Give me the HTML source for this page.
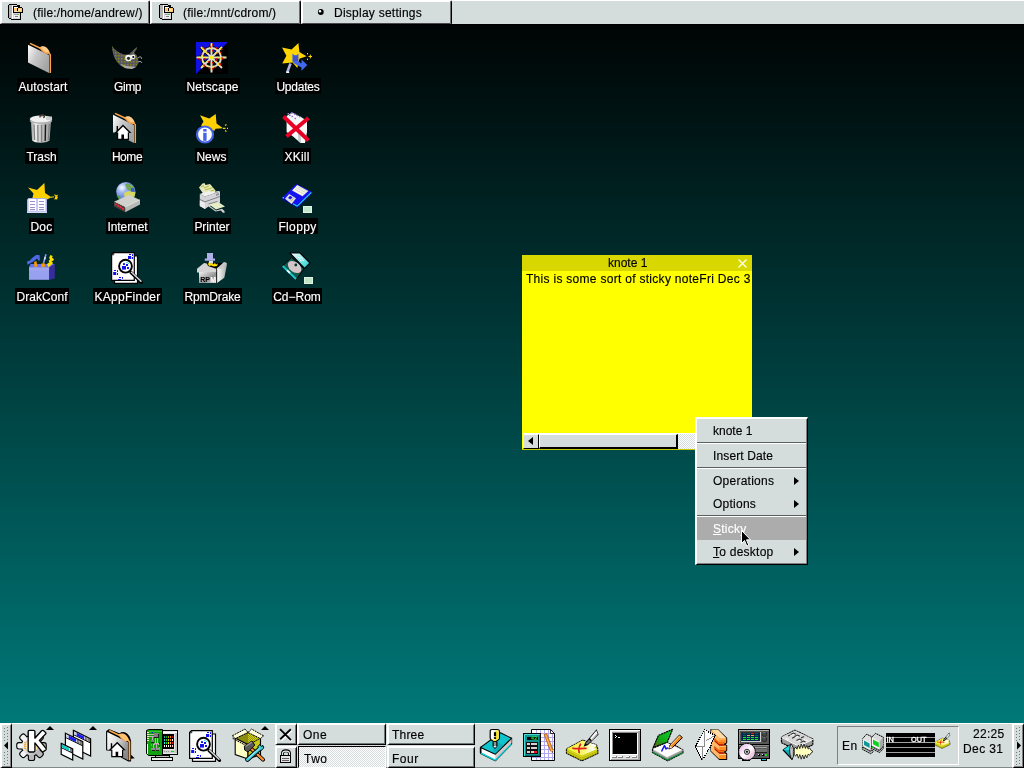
<!DOCTYPE html>
<html>
<head>
<meta charset="utf-8">
<title>KDE desktop</title>
<style>
html,body{margin:0;padding:0;}
body{width:1024px;height:768px;overflow:hidden;position:relative;font-family:"Liberation Sans",sans-serif;font-size:12px;color:#000;
 background:linear-gradient(to bottom,#000000 0px,#008080 768px);}
svg{position:absolute;display:block;overflow:visible;}
.px{shape-rendering:crispEdges;}
/* top taskbar */
#tbar{position:absolute;left:0;top:0;width:1024px;height:24px;background:#d4dcdc;border-top:1px solid #fff;border-bottom:1px solid #000;box-sizing:content-box;height:23px;}
.tbtn{position:absolute;top:-1px;height:24px;background:#d4dcdc;box-sizing:border-box;border-top:2px solid #fff;border-left:2px solid #fff;border-right:1px solid #000;border-bottom:1px solid #484848;}
.tbtn i{position:absolute;right:0;top:-1px;width:1px;height:23px;background:#707070;}
.tbtn span{position:absolute;top:4px;font-size:12px;white-space:nowrap;}
/* desktop icons */
.dl{position:absolute;height:16px;line-height:19px;overflow:hidden;background:#000;color:#fff;font-size:12px;text-align:center;white-space:nowrap;}
/* knote */
#knote{position:absolute;left:522px;top:255px;width:230px;height:195px;background:#ffff00;}
#ktitle{position:absolute;left:0;top:0;width:230px;height:16px;background:#d8d800;line-height:17px;font-size:12px;letter-spacing:0px;box-sizing:border-box;padding-left:86px;}
#ktext{position:absolute;left:4px;top:17px;font-size:12px;line-height:14px;white-space:nowrap;letter-spacing:0.29px;}
/* menu */
#menu{position:absolute;left:695px;top:417px;width:113px;height:148px;background:#d4dcdc;box-sizing:border-box;border-top:2px solid #fff;border-left:2px solid #fff;border-right:1px solid #000;border-bottom:1px solid #000;box-shadow:inset -1px -1px 0 #808080;}
.mi{position:absolute;left:16px;font-size:12px;line-height:14px;letter-spacing:0.25px;white-space:nowrap;}
.sep{position:absolute;left:0;width:109px;height:1px;background:#586060;border-bottom:1px solid #fff;}
.arr{position:absolute;left:97px;width:0;height:0;border-left:5px solid #000;border-top:4px solid transparent;border-bottom:4px solid transparent;}
/* panel */
#panel{position:absolute;left:0;top:723px;width:1024px;height:45px;background:#d4dcdc;border-top:1px solid #fff;border-bottom:1px solid #808888;box-sizing:border-box;}
.pb{position:absolute;box-sizing:border-box;background:#d4dcdc;border-top:2px solid #fff;border-left:2px solid #fff;border-right:1px solid #000;border-bottom:1px solid #000;box-shadow:inset -1px -1px 0 #707878;font-size:12px;}
.pb span{position:absolute;left:4px;top:2px;letter-spacing:0.5px;}
.pi{position:absolute;width:32px;height:32px;}
</style>
</head>
<body>
<div id="root" style="position:absolute;left:0;top:0;width:1024px;height:768px;will-change:transform;-webkit-text-stroke-width:0.15px;">
<!-- TOPBAR -->
<div id="tbar">
 <div class="tbtn" style="left:0;width:150px"><i></i><svg class="px" style="left:6px;top:2px" width="16" height="17" viewBox="0 0 16 17">
<rect x="1" y="0" width="8" height="1" fill="#000"/><rect x="0" y="1" width="1" height="13" fill="#000"/><rect x="1" y="14" width="2" height="1" fill="#000"/><rect x="3" y="15" width="10" height="1" fill="#000"/><rect x="12" y="9" width="1" height="6" fill="#000"/>
<rect x="1" y="1" width="3" height="13" fill="#b4b4b4"/><rect x="4" y="1" width="1" height="14" fill="#fff"/><rect x="3" y="14" width="1" height="1" fill="#b4b4b4"/>
<rect x="5" y="1" width="7" height="14" fill="#d8d8d8"/>
<rect x="5" y="2" width="10" height="7" fill="#000"/><rect x="9" y="1" width="3" height="1" fill="#000"/><rect x="12" y="2" width="2" height="1" fill="#d4dcdc"/><rect x="14" y="2" width="1" height="2" fill="#d4dcdc"/>
<rect x="6" y="4" width="8" height="4" fill="#ffc870"/><rect x="6" y="3" width="4" height="1" fill="#fff"/><rect x="9" y="4" width="1" height="3" fill="#000"/><rect x="6" y="7" width="3" height="1" fill="#e0e0e0"/><rect x="10" y="5" width="3" height="2" fill="#ffe0a0"/>
<rect x="6" y="10" width="5" height="1" fill="#a0a0a0"/><rect x="9" y="10" width="2" height="1" fill="#60c060"/><rect x="6" y="11" width="5" height="3" fill="#f0f0f0"/><rect x="7" y="12" width="3" height="1" fill="#808080"/>
</svg><span style="left:31px;letter-spacing:0.18px">(file:/home/andrew/)</span></div>
 <div class="tbtn" style="left:150px;width:151px"><i></i><svg class="px" style="left:7px;top:2px" width="16" height="17" viewBox="0 0 16 17">
<rect x="1" y="0" width="8" height="1" fill="#000"/><rect x="0" y="1" width="1" height="13" fill="#000"/><rect x="1" y="14" width="2" height="1" fill="#000"/><rect x="3" y="15" width="10" height="1" fill="#000"/><rect x="12" y="9" width="1" height="6" fill="#000"/>
<rect x="1" y="1" width="3" height="13" fill="#b4b4b4"/><rect x="4" y="1" width="1" height="14" fill="#fff"/><rect x="3" y="14" width="1" height="1" fill="#b4b4b4"/>
<rect x="5" y="1" width="7" height="14" fill="#d8d8d8"/>
<rect x="5" y="2" width="10" height="7" fill="#000"/><rect x="9" y="1" width="3" height="1" fill="#000"/><rect x="12" y="2" width="2" height="1" fill="#d4dcdc"/><rect x="14" y="2" width="1" height="2" fill="#d4dcdc"/>
<rect x="6" y="4" width="8" height="4" fill="#ffc870"/><rect x="6" y="3" width="4" height="1" fill="#fff"/><rect x="9" y="4" width="1" height="3" fill="#000"/><rect x="6" y="7" width="3" height="1" fill="#e0e0e0"/><rect x="10" y="5" width="3" height="2" fill="#ffe0a0"/>
<rect x="6" y="10" width="5" height="1" fill="#a0a0a0"/><rect x="9" y="10" width="2" height="1" fill="#60c060"/><rect x="6" y="11" width="5" height="3" fill="#f0f0f0"/><rect x="7" y="12" width="3" height="1" fill="#808080"/>
</svg><span style="left:31px;letter-spacing:0.18px">(file:/mnt/cdrom/)</span></div>
 <div class="tbtn" style="left:301px;width:151px"><i></i><svg style="left:14px;top:6px" width="8" height="8" viewBox="0 0 8 8"><circle cx="3.8" cy="4" r="2.9" fill="#000"/><circle cx="3" cy="3.2" r="1.2" fill="#fff"/></svg><span style="left:31px;letter-spacing:0.25px">Display settings</span></div>
</div>
<!-- DESKTOP ICONS -->
<svg class="px" style="left:26px;top:42px" width="32" height="32" viewBox="0 0 32 32"><g shape-rendering="auto"><defs><linearGradient id="gAS" x1="0" x2="1" y1="0" y2="0.6"><stop offset="0" stop-color="#fff"/><stop offset="0.45" stop-color="#c8c8c8"/><stop offset="1" stop-color="#a4a4a4"/></linearGradient></defs>
<path d="M2 2.8L23 13V31L2 20.5Z" fill="url(#gAS)"/>
<path d="M13 6L15 4.6C17 3.8,19.5 4.4,21 6C22.5 7.5,23.5 9.5,24 11.5L21 11.5L19 10.8L17.5 9.5Z" fill="#ffcc88"/>
<path d="M4 1.4L14.5 6.2L17 9.2L19.5 11L22.5 11L24.3 12.5V31" stroke="#ffa448" stroke-width="1.5" fill="none" stroke-linejoin="round"/>
</g></svg>
<div class="dl" style="left:17px;top:78px;width:52px;letter-spacing:0.13px">Autostart</div>
<svg class="px" style="left:111px;top:42px" width="32" height="32" viewBox="0 0 32 32"><g shape-rendering="auto"><defs><pattern id="pGi" width="3" height="3" patternUnits="userSpaceOnUse"><rect width="3" height="3" fill="#5c5c68"/><rect x="1" y="1" width="1.5" height="1.5" fill="#8c8c10"/></pattern></defs>
<path d="M1 4L1.5 9L3 15L6 20L10 24L15 26.5L21 27L25 25L27.5 21L27 16L25 12.5L23 11L26 6.5L25.5 5L21 9.5L18 12.5L13 12.5L8 10.5L4 7.5Z" fill="url(#pGi)" opacity="0.95"/>
<path d="M9 22L14 26L21 27L25 25L22 24.5L16 24Z" fill="#c8c8c0" opacity="0.7"/>
<circle cx="17.5" cy="16" r="3.3" fill="#f4f4f4"/><circle cx="22" cy="14.8" r="2.4" fill="#f4f4f4"/>
<circle cx="17.5" cy="16.3" r="1.6" fill="#203020"/><circle cx="22.3" cy="15" r="1.1" fill="#000"/>
<path d="M27 16C29 14,31 15,30.5 17M27 20C29 19,31 19.5,30.5 21" stroke="#b8b8b8" stroke-width="1" fill="none"/>
</g></svg>
<div class="dl" style="left:113px;top:78px;width:29px;letter-spacing:-0.45px">Gimp</div>
<svg class="px" style="left:196px;top:42px" width="32" height="32" viewBox="0 0 32 32"><g shape-rendering="auto"><rect width="32" height="32" fill="#000"/><path d="M0 0H32L0 32Z" fill="#1010e8"/>
<g stroke="#080808" stroke-width="3.6" fill="none"><circle cx="15.5" cy="15.5" r="9.5"/><path d="M15.5 1V30.5M0.5 15.5H30.5M5 5L26 26M26 5L5 26"/></g>
<g stroke="#dcdcdc" stroke-width="1.9" fill="none"><circle cx="15.5" cy="15.5" r="9.5"/><path d="M15.5 1V30.5M0.5 15.5H30.5M5 5L26 26M26 5L5 26"/></g>
<g stroke="#ffee00" stroke-width="1.5" fill="none" stroke-dasharray="2 4"><circle cx="15.5" cy="15.5" r="9.5"/><path d="M15.5 2.5V29.5M2.5 15.5H29.5M6 6L25.5 25.5M25 6L5.5 25.5"/></g>
<g stroke="#e01010" stroke-width="1.5" fill="none" stroke-dasharray="1.5 4.5"><circle cx="15.5" cy="15.5" r="10.6"/><path d="M16.8 2V29.5M2 16.8H29.5M6.8 5.2L26.5 24.8M26.2 6.8L6.2 26.4"/></g>
<circle cx="15.5" cy="15.5" r="2.2" fill="#ffee00" stroke="#e0e0e0" stroke-width="0.8"/>
</g></svg>
<div class="dl" style="left:185px;top:78px;width:55px;letter-spacing:0.19px">Netscape</div>
<svg class="px" style="left:281px;top:42px" width="32" height="32" viewBox="0 0 32 32"><g shape-rendering="auto">
<path d="M17.4 1L18.4 10L25.5 14.2L18.4 16.8L16.3 26L11.6 20.5L1.2 21.5L5.4 13.7L1 5.4L10.6 7.5Z" fill="#ffd400"/>
<path d="M9.5 21.5L6.2 30.4" stroke="#b4b4e4" stroke-width="2.6"/><path d="M5.2 29.5h3v1.5h-3z" fill="#fff"/>
<path d="M11.4 11.5L13.5 13.2L15.5 13.2L17.5 11.5V19.5L20.5 21.5V17.4L26.3 23L20.5 28.8V25.5L14 22L11.4 19.5Z" fill="#4468ec"/>
<path d="M12 13.5h5v5.5h-5z" fill="#3848b8" opacity="0.6"/>
<path d="M27.5 14.5H31M29.3 12.6V16.4M26.5 11V12.4M26.5 16.6V18" stroke="#ffd400" stroke-width="1"/>
</g></svg>
<div class="dl" style="left:275px;top:78px;width:46px;letter-spacing:-0.21px">Updates</div>
<svg class="px" style="left:26px;top:112px" width="32" height="32" viewBox="0 0 32 32"><g shape-rendering="auto"><defs><linearGradient id="gTr" x1="0" x2="1"><stop offset="0" stop-color="#909090"/><stop offset="0.2" stop-color="#f0f0f0"/><stop offset="0.55" stop-color="#c0c0c0"/><stop offset="1" stop-color="#a0a0a0"/></linearGradient></defs>
<path d="M4.8 9L6 28.5C9 31.5,20 31.5,23.5 28.5L25 9Z" fill="url(#gTr)"/>
<g stroke="#808080" stroke-width="1.3"><path d="M8 12.5L8.6 28M11.8 13L12 29.5M15.6 13V30M23.3 12L22.4 28"/></g>
<path d="M19.5 12.5L19.2 29" stroke="#181818" stroke-width="1.4"/>
<ellipse cx="15" cy="7" rx="11.2" ry="3.6" fill="#f0f0f0"/><path d="M3.8 7.5C6 11.5,24 11.5,26.2 7.5L26 9.5C23 12.5,7 12.5,4 9.5Z" fill="#b0b0b0"/>
<path d="M20 4.5h6v3.5h-6z" fill="#d0d0d0"/>
<path d="M14 5.5C13.5 2,18.5 1.5,18.5 5.5" stroke="#303030" stroke-width="1.3" fill="none"/><rect x="15" y="3" width="1.5" height="1.5" fill="#c02020"/><rect x="17" y="4.5" width="1.3" height="1.6" fill="#208020"/>
</g></svg>
<div class="dl" style="left:25px;top:148px;width:33px;letter-spacing:-0.01px">Trash</div>
<svg class="px" style="left:111px;top:112px" width="32" height="32" viewBox="0 0 32 32"><g shape-rendering="auto"><defs><linearGradient id="gHo" x1="0" x2="1" y1="0" y2="0.6"><stop offset="0" stop-color="#fff"/><stop offset="0.45" stop-color="#c8c8c8"/><stop offset="1" stop-color="#a4a4a4"/></linearGradient></defs>
<path d="M2 2.8L23 13V31L17 28V21L2 20.5Z" fill="url(#gHo)"/>
<path d="M13 6L15 4.6C17 3.8,19.5 4.4,21 6C22.5 7.5,23.5 9.5,24 11.5L21 11.5L19 10.8L17.5 9.5Z" fill="#ffcc88"/>
<path d="M4 1.4L14.5 6.2L17 9.2L19.5 11L22.5 11L24.3 12.5V31" stroke="#ffa448" stroke-width="1.5" fill="none" stroke-linejoin="round"/>
<path d="M12 12.5L3.5 21H6V28H18V21H20.5Z" fill="#000"/>
<path d="M6.3 14V19" stroke="#000" stroke-width="1.4"/>
<path d="M12 14.6L6 20.5H7.2V26.8H10.4V22.5H13V26.8H16.8V20.5H18Z" fill="#fff"/>
</g></svg>
<div class="dl" style="left:111px;top:148px;width:32px;letter-spacing:-0.45px">Home</div>
<svg class="px" style="left:196px;top:112px" width="32" height="32" viewBox="0 0 32 32"><g shape-rendering="auto">
<path d="M4 3.3L13.2 6.6L19.7 2L20.5 11.5L27 16.3L19.5 16.8L18.2 19L12 15L5 13.8L7.5 9.5Z" fill="#ffd000"/>
<path d="M27 16.3H29.5M29 13.5L30.5 12.5M29 18.5L30.5 19.5M31 16.3H32" stroke="#ffd000" stroke-width="1.2"/>
<circle cx="9" cy="22.5" r="8" fill="#fff" stroke="#4464e4" stroke-width="2.2"/>
<rect x="7.2" y="17" width="3.4" height="2.6" fill="#4464e4"/><rect x="7.2" y="20.8" width="3.4" height="8" fill="#4464e4"/>
</g></svg>
<div class="dl" style="left:195px;top:148px;width:33px;letter-spacing:0.05px">News</div>
<svg class="px" style="left:281px;top:112px" width="32" height="32" viewBox="0 0 32 32"><g shape-rendering="auto">
<path d="M5.6 4L11 0.5L20 5L26 9V20L24 31H19.5L11.5 24L5.6 20Z" fill="#f4f8f8"/>
<path d="M17 20L20 22.5V31H19.5L17 28.5Z" fill="#c8d0d0"/>
<g fill="#9070c8"><rect x="6.5" y="1" width="1.6" height="1.4"/><rect x="10" y="0.4" width="1.6" height="1.4"/><rect x="13" y="1.5" width="1.6" height="1.4"/><rect x="15.5" y="2.8" width="1.6" height="1.4"/><rect x="18" y="4" width="1.6" height="1.4"/><rect x="10.5" y="3.8" width="1.6" height="1.4"/><rect x="13.5" y="5.8" width="1.6" height="1.4"/><rect x="8" y="2.6" width="1.6" height="1.4"/></g>
<path d="M2.5 4.5L27.5 28.5M27.5 6L5.5 24.5" stroke="#e80024" stroke-width="3.9" stroke-linecap="butt"/>
</g></svg>
<div class="dl" style="left:283px;top:148px;width:28px;letter-spacing:0.24px">XKill</div>
<svg class="px" style="left:26px;top:182px" width="32" height="32" viewBox="0 0 32 32"><g shape-rendering="auto">
<path d="M2 5.4L11 8L18.4 1L19 11L25.5 15.3L21 17.5H6L7.5 11.5Z" fill="#ffd000"/>
<path d="M25 15.3L28 14.8M28.5 12.5L30 14.5L31.5 13M30 14.5L31.8 15.5M30 14.5L28.8 17.5M30 14.5L31 17.5" stroke="#ffd000" stroke-width="1.1" fill="none"/>
<path d="M1 17.5L2.5 16H20L21 17.5V31H1Z" fill="#b0b0e8"/>
<path d="M2.5 17H10.3V29H2.5zM11.7 17H19.5V29H11.7z" fill="#fff"/>
<path d="M1 29.5H21V31H1z" fill="#d8d8f8"/>
<g stroke="#9a90d0" stroke-width="1.2"><path d="M4 19.5H9M4 22.5H9M4 25.5H9M4 27.6H9M13 19.5H18M13 22.5H18M13 25.5H18M13 27.6H18"/></g>
</g></svg>
<div class="dl" style="left:29px;top:218px;width:25px;letter-spacing:0.29px">Doc</div>
<svg class="px" style="left:111px;top:182px" width="32" height="32" viewBox="0 0 32 32"><g shape-rendering="auto"><defs><radialGradient id="gIn" cx="0.3" cy="0.3" r="0.8"><stop offset="0" stop-color="#ffffff"/><stop offset="0.3" stop-color="#a0b8f0"/><stop offset="1" stop-color="#3050d0"/></radialGradient><clipPath id="cIn"><circle cx="14.8" cy="9.6" r="9.6"/></clipPath></defs>
<circle cx="14.8" cy="9.6" r="9.6" fill="url(#gIn)"/>
<g clip-path="url(#cIn)" transform="translate(0,1)"><path d="M14 1C18 -1,24 3,24 6L20 8L16 6.5Z" fill="#70a858"/><path d="M13 10L17 8L25 9L25 14L18 16L13.5 14Z" fill="#d8d860"/><path d="M20 5L24.5 5.5V9L20 8.5Z" fill="#3858d8"/><path d="M5 12L9 13L10 18L6 17Z" fill="#58a048"/><path d="M19 3L23 5L24 12L22 14L25 15V0Z" fill="#88b070" opacity="0.8"/></g>
<path d="M3 19.7L17.9 12.7L29 17.9L14.2 25.2Z" fill="#d0d0cc"/>
<path d="M3 19.7L14.2 25.2V30.3L3 24.5Z" fill="#484040"/>
<path d="M14.2 25.2L29 17.9V22.5L14.2 30.3Z" fill="#b8b8b4"/>
<path d="M14.2 25.2L29 17.9" stroke="#f0f0f0" stroke-width="0.8"/>
<g fill="#f02838"><circle cx="4.8" cy="22.3" r="1.1"/><circle cx="7.2" cy="23.8" r="1.1"/><circle cx="9.6" cy="25.2" r="1.1"/><circle cx="12" cy="26.8" r="1.1"/></g>
</g></svg>
<div class="dl" style="left:106px;top:218px;width:43px;letter-spacing:-0.06px">Internet</div>
<svg class="px" style="left:196px;top:182px" width="32" height="32" viewBox="0 0 32 32"><g shape-rendering="auto">
<path d="M3 5.5L6.5 1.5L8.5 1L9.5 3L14 2L19.5 8.5L19 11L9 14L6 10Z" fill="#e8e8c0"/>
<path d="M5 5L8 3.5M9 8L17 5.5M10 10.5L18 8M8 6L13 4" stroke="#b0c040" stroke-width="1.2"/>
<path d="M3.8 12L9 14.5L24 9.5V20.5L12.5 24.5L9 27L3.8 24Z" fill="#d4d4d8"/>
<path d="M3.8 12L13 8.8L19 11L9 14.5Z" fill="#f0f0f0"/><path d="M19 11L24 9.5L23 9L19.5 9.5Z" fill="#e8e8e8"/>
<path d="M20 12L23 11V13L20 14Z" fill="#9090a0"/>
<path d="M4 17.5L9 19.8L24 14.5" stroke="#808088" stroke-width="1" fill="none"/>
<path d="M3.8 18.5L9 21V27L3.8 24Z" fill="#ececec"/>
<path d="M12.5 22L21.5 19.5L29 24.5L20 27.5Z" fill="#e4ecc8"/>
<path d="M12.5 22L21.5 19.5" stroke="#808088" stroke-width="1"/>
<path d="M12.5 23L20 28.5L26 26.8L28.5 29V31L26.5 30.5L25 28.5L19.5 29.5L12.5 24.5Z" fill="#d0d0d0"/>
</g></svg>
<div class="dl" style="left:193px;top:218px;width:38px;letter-spacing:-0.02px">Printer</div>
<svg class="px" style="left:281px;top:182px" width="32" height="32" viewBox="0 0 32 32"><g shape-rendering="auto">
<path d="M1.2 15.8L15.3 2L30.9 10L16.3 24.6Z" fill="#1414f0"/>
<path d="M1.2 15.8L16.3 24.6V26L1.2 17.4Z" fill="#0808a0"/>
<path d="M16.3 24.6L30.9 10V11.4L16.3 26Z" fill="#0c0cc0"/>
<path d="M30.4 10.3L16.3 24.2M12 21.8L16.3 24.2" stroke="#20d8f0" stroke-width="1.1" fill="none"/>
<rect x="1.6" y="15" width="1.4" height="1.4" fill="#20d8f0"/>
<path d="M11 8.5L16.3 3L27.3 9L21.5 14.2Z" fill="#f4f4ec"/>
<path d="M14 7.5L23 12M15.5 6L24.5 10.5M17 4.8L26 9.3" stroke="#d0d0c0" stroke-width="0.8"/>
<path d="M4 16.8L8.2 12L15 16.3L10.6 22Z" fill="#e0e0d8"/>
<path d="M7 16L9 13.8L11.5 15.2L9.5 17.5Z" fill="#1414f0"/>
<path d="M10 19L12.5 16" stroke="#a0a098" stroke-width="0.8"/>
<rect x="22" y="24" width="9" height="7" fill="#c4e8d0"/><path d="M22.5 24.5h8v6h-8z" fill="none" stroke="#e8f4e8" stroke-width="1"/>
</g></svg>
<div class="dl" style="left:277px;top:218px;width:41px;letter-spacing:0.36px">Floppy</div>
<svg class="px" style="left:26px;top:252px" width="32" height="32" viewBox="0 0 32 32"><g shape-rendering="auto">
<path d="M3 15.3L4.5 12H28.8L23.3 15.3Z" fill="#6474f0"/>
<path d="M3 15.3H23.3V27.8H3Z" fill="#98a0f0"/>
<path d="M3 15.3H23.3V18.5H3Z" fill="#a8a8e8" opacity="0.8"/>
<path d="M23.3 15.3L28.8 12V26.5L23.3 27.8Z" fill="#382c9c"/>
<path d="M1 9.5L4 8.5L6 6L10 3L13.5 3L14 8.5L12.5 8.5L11 6.5L7.5 9.5L4 11.5L1.5 12.8Z" fill="#5068e8"/>
<path d="M8 10L10.5 9L11.3 14.5L8.5 15Z" fill="#ff9800"/>
<path d="M20 2.2L17.5 11" stroke="#8898f0" stroke-width="1.6"/><path d="M19.2 5L18.6 7.5" stroke="#e8e8ff" stroke-width="1.4"/>
<path d="M15.5 11.5L18.5 11L19.2 14.8L15 15Z" fill="#ff9800"/>
<path d="M25.5 3.5L24.5 6L26.5 7.5L24 9L25.5 11L22.5 12.5L23.5 14.5" stroke="#ffe000" stroke-width="2.6" fill="none" stroke-linejoin="round"/>
</g></svg>
<div class="dl" style="left:15px;top:288px;width:54px;letter-spacing:0.06px">DrakConf</div>
<svg class="px" style="left:111px;top:252px" width="32" height="32" viewBox="0 0 32 32"><g shape-rendering="auto">
<path d="M3.5 4H26.5V31.3H3.5Z" fill="#fff" stroke="#000" stroke-width="1.2"/>
<path d="M0.6 2.5L2.5 0.6H23.3V28.3H0.6Z" fill="#fff" stroke="#000" stroke-width="1.2"/>
<path d="M0.6 2.8H2.8V0.6" fill="none" stroke="#000" stroke-width="0.8"/>
<g fill="#1010f0"><rect x="17" y="4" width="3.2" height="3"/><rect x="18" y="2" width="2" height="1"/><rect x="21" y="2.2" width="1" height="1.8"/><rect x="21" y="5" width="1" height="2"/>
<rect x="2.2" y="20" width="3" height="3"/><rect x="3" y="18" width="2" height="1"/><rect x="6" y="18.2" width="1" height="1.8"/><rect x="6" y="21" width="1" height="2"/>
<rect x="7" y="27" width="3" height="1"/><rect x="8" y="25" width="2" height="1"/><rect x="11" y="25" width="1" height="1.8"/></g>
<path d="M20 20.5L30.5 30.3" stroke="#000" stroke-width="3.2" stroke-linecap="round"/><path d="M20.5 20.3L30 29.3" stroke="#d8d8d8" stroke-width="1.5" stroke-linecap="round"/>
<circle cx="14.5" cy="14.2" r="6.4" fill="#fff" stroke="#000" stroke-width="1.9"/>
<g fill="#1010f0"><rect x="11" y="14" width="4" height="3.6"/><rect x="12" y="11.2" width="2" height="1.8"/><rect x="15" y="12" width="2" height="2"/><rect x="16" y="15" width="2" height="2"/></g>
<path d="M15 10.2L17 10.8L17.8 12" stroke="#40e8f0" stroke-width="1" fill="none"/>
</g></svg>
<div class="dl" style="left:93px;top:288px;width:69px;letter-spacing:0.28px">KAppFinder</div>
<svg class="px" style="left:196px;top:252px" width="32" height="32" viewBox="0 0 32 32"><g shape-rendering="auto"><defs><linearGradient id="gRp" x1="0" x2="1" y1="0" y2="1"><stop offset="0" stop-color="#f4f4f4"/><stop offset="0.6" stop-color="#909090"/><stop offset="1" stop-color="#e0e0e0"/></linearGradient><linearGradient id="gRp2" x1="0" x2="1"><stop offset="0" stop-color="#fff"/><stop offset="1" stop-color="#a8a8a8"/></linearGradient></defs>
<path d="M8 11L21 11L30 11L21 17H3Z" fill="#000"/>
<path d="M11 1H17V6.4H19V8.8H8.8V6.4H11Z" fill="#b0b0e8"/>
<path d="M12 12L13 10L15 11.5L16.5 10.5L17 12.5L19 11L20 12.5L22 11.5L21 14L18 14.5L15 13.5L13 14Z" fill="#ffe000"/>
<path d="M13 8.8h4v2.5h-4z" fill="#e0e0f0"/>
<path d="M1 16.8L8 11L11 11.5L12 14L21 17V20.5H1Z" fill="#d4d4d4"/>
<path d="M3 20H20.5V31H3Z" fill="url(#gRp)"/>
<path d="M21 16.3L30.9 11V13L28.3 25.7L21 30.9Z" fill="url(#gRp2)"/>
<path d="M21 16.3L28 10L31 11L25 17Z" fill="#c8c8c8"/>
<path d="M20.7 17V31" stroke="#202020" stroke-width="1"/>
<text x="4.3" y="29.6" font-family="Liberation Sans" font-weight="bold" font-size="7" fill="#000">RP</text><text x="14.2" y="29.6" font-family="Liberation Sans" font-weight="bold" font-size="7" fill="#fff">M</text>
</g></svg>
<div class="dl" style="left:183px;top:288px;width:59px;letter-spacing:-0.14px">RpmDrake</div>
<svg class="px" style="left:281px;top:252px" width="32" height="32" viewBox="0 0 32 32"><g shape-rendering="auto"><defs><linearGradient id="gCd" x1="0" x2="1" y1="0" y2="1"><stop offset="0" stop-color="#fff"/><stop offset="0.55" stop-color="#80e8e8"/><stop offset="1" stop-color="#10c8c8"/></linearGradient></defs>
<path d="M1.7 13.7L10.6 5.4L23 16.8L15.3 27.3Z" fill="#0c5c50" stroke="#000" stroke-width="1"/>
<path d="M1.7 14L15 27" stroke="#20c8d0" stroke-width="1.8"/><path d="M6 18.2L9 21.2" stroke="#fff" stroke-width="1.8"/>
<ellipse cx="13.6" cy="15" rx="7.6" ry="5" transform="rotate(38 13.6 15)" fill="#d4c4cc"/>
<path d="M9 10L18 21" stroke="#f0b8b8" stroke-width="0.9"/><path d="M8 17L19 14" stroke="#c0e0c8" stroke-width="0.9" opacity="0.7"/>
<circle cx="14.8" cy="13" r="1.4" fill="#083830"/>
<path d="M8.8 1H19L29 11L23.6 16.3Z" fill="url(#gCd)" stroke="#000" stroke-width="1.1" stroke-linejoin="round"/>
<g fill="#fff"><rect x="17" y="5" width="1.2" height="1"/><rect x="19.5" y="5" width="1.2" height="1"/><rect x="18" y="6.5" width="1.2" height="1"/><rect x="20.5" y="6.5" width="1.2" height="1"/><rect x="19" y="8" width="1.2" height="1"/><rect x="21.5" y="8" width="1.2" height="1"/></g>
<rect x="23" y="25" width="9" height="7" fill="#bce8c4"/><path d="M23.5 25.5h8v6h-8z" fill="none" stroke="#e4f0e4" stroke-width="1"/>
</g></svg>
<div class="dl" style="left:272px;top:288px;width:50px;letter-spacing:0.0px">Cd−Rom</div>
<!-- KNOTE -->
<div id="knote">
 <div id="ktitle">knote 1</div>
 <svg style="left:216px;top:4px" width="9" height="9" viewBox="0 0 9 9"><path d="M0.5 0.5L8.5 8.5M8.5 0.5L0.5 8.5" stroke="#fff" stroke-width="1.2" fill="none"/></svg>
 <div id="ktext">This is some sort of sticky noteFri Dec 3</div>
 <!-- scrollbar -->
 <div style="position:absolute;left:1px;top:178px;width:229px;height:16px;background:#d4dcdc;background-image:repeating-conic-gradient(#ffffff 0 25%,#d4dcdc 0 50%);background-size:2px 2px;"></div>
 <div style="position:absolute;left:1px;top:178px;width:229px;height:1px;background:#fff"></div>
 <div style="position:absolute;left:1px;top:179px;width:16px;height:15px;background:#d4dcdc;box-sizing:border-box;border-top:1px solid #fff;border-left:1px solid #fff;border-right:1px solid #000;border-bottom:1px solid #000;"></div>
 <div style="position:absolute;left:6px;top:182px;width:0;height:0;border-right:5px solid #000;border-top:4px solid transparent;border-bottom:4px solid transparent;"></div>
 <div style="position:absolute;left:17px;top:179px;width:139px;height:15px;background:#d4dcdc;box-sizing:border-box;border-top:1px solid #fff;border-left:1px solid #fff;border-right:2px solid #000;border-bottom:2px solid #000;"></div>
 <div style="position:absolute;left:0;top:194px;width:230px;height:1px;background:#c8c800"></div>
</div>
<!-- MENU -->
<div id="menu">
 <div class="mi" style="top:5px;letter-spacing:0px">knote 1</div>
 <div class="sep" style="top:23px"></div>
 <div class="mi" style="top:30px;letter-spacing:0.13px">Insert Date</div>
 <div class="sep" style="top:48px"></div>
 <div class="mi" style="top:55px">Operations</div><div class="arr" style="top:58px"></div>
 <div class="mi" style="top:78px">Options</div><div class="arr" style="top:81px"></div>
 <div class="sep" style="top:96px"></div>
 <div style="position:absolute;left:0;top:98px;width:109px;height:23px;background:#acacac"></div>
 <div class="mi" style="top:103px;color:#fff"><u>S</u>ticky</div>
 <div class="mi" style="top:126px"><u>T</u>o desktop</div><div class="arr" style="top:129px"></div>
</div>
<!-- cursor -->
<svg style="left:741px;top:530px" width="10" height="17" viewBox="0 0 10 17"><path d="M0.5 0.5V13.5L3.5 10.5L5.8 16L7.8 15.2L5.5 9.8H9.5Z" fill="#000" stroke="#fff" stroke-width="1"/></svg>
<!-- PANEL -->
<div id="panel">
<svg class="px" style="left:16px;top:6px" width="32" height="32" viewBox="0 0 32 32"><g shape-rendering="auto"><defs><linearGradient id="gK" x1="0" y1="0" x2="1" y2="1"><stop offset="0" stop-color="#ffffff"/><stop offset="0.5" stop-color="#e0e0e0"/><stop offset="1" stop-color="#a0a0a0"/></linearGradient></defs>
<rect x="23.5" y="13.2" width="6.2" height="5.2" rx="1.6" transform="rotate(0 15.5 15.8)" fill="#000" stroke="#000" stroke-width="2.2"/><rect x="23.5" y="13.2" width="6.2" height="5.2" rx="1.6" transform="rotate(45 15.5 15.8)" fill="#000" stroke="#000" stroke-width="2.2"/><rect x="23.5" y="13.2" width="6.2" height="5.2" rx="1.6" transform="rotate(90 15.5 15.8)" fill="#000" stroke="#000" stroke-width="2.2"/><rect x="23.5" y="13.2" width="6.2" height="5.2" rx="1.6" transform="rotate(135 15.5 15.8)" fill="#000" stroke="#000" stroke-width="2.2"/><rect x="23.5" y="13.2" width="6.2" height="5.2" rx="1.6" transform="rotate(180 15.5 15.8)" fill="#000" stroke="#000" stroke-width="2.2"/><rect x="23.5" y="13.2" width="6.2" height="5.2" rx="1.6" transform="rotate(225 15.5 15.8)" fill="#000" stroke="#000" stroke-width="2.2"/><rect x="23.5" y="13.2" width="6.2" height="5.2" rx="1.6" transform="rotate(270 15.5 15.8)" fill="#000" stroke="#000" stroke-width="2.2"/><rect x="23.5" y="13.2" width="6.2" height="5.2" rx="1.6" transform="rotate(315 15.5 15.8)" fill="#000" stroke="#000" stroke-width="2.2"/><circle cx="15.5" cy="15.8" r="10.6" fill="#000"/>
<rect x="23.5" y="13.2" width="6.2" height="5.2" rx="1.6" transform="rotate(0 15.5 15.8)" fill="#b8b8b8"/><rect x="23.5" y="13.2" width="6.2" height="5.2" rx="1.6" transform="rotate(45 15.5 15.8)" fill="#b8b8b8"/><rect x="23.5" y="13.2" width="6.2" height="5.2" rx="1.6" transform="rotate(90 15.5 15.8)" fill="#b8b8b8"/><rect x="23.5" y="13.2" width="6.2" height="5.2" rx="1.6" transform="rotate(135 15.5 15.8)" fill="#f4f4f4"/><rect x="23.5" y="13.2" width="6.2" height="5.2" rx="1.6" transform="rotate(180 15.5 15.8)" fill="#f4f4f4"/><rect x="23.5" y="13.2" width="6.2" height="5.2" rx="1.6" transform="rotate(225 15.5 15.8)" fill="#f4f4f4"/><rect x="23.5" y="13.2" width="6.2" height="5.2" rx="1.6" transform="rotate(270 15.5 15.8)" fill="#f4f4f4"/><rect x="23.5" y="13.2" width="6.2" height="5.2" rx="1.6" transform="rotate(315 15.5 15.8)" fill="#b8b8b8"/><circle cx="15.5" cy="15.8" r="9.6" fill="url(#gK)"/>
<circle cx="15.5" cy="15.8" r="6.8" fill="#ffe0a0" stroke="#b0b0b0" stroke-width="0.8"/>
<path d="M9 12V20" stroke="#ffa020" stroke-width="1.6" stroke-dasharray="1 1"/>
<path d="M12.2 1.6Q12.2 0.3,13.5 0.3H17.6Q18.9 0.3,18.9 1.6V8.2L25.6 0.8Q26.4 0,27.4 0.6L29.6 2.4Q30.4 3.2,29.6 4L23.4 10.4L30 18.4Q30.6 19.4,29.8 20L27.4 21.6Q26.4 22.2,25.6 21.2L18.9 13V20.6Q18.9 22,17.6 22H13.5Q12.2 22,12.2 20.6Z" fill="#fff" stroke="#000" stroke-width="1.3" stroke-linejoin="round"/>
</g></svg>
<svg class="px" style="left:60px;top:6px" width="32" height="32" viewBox="0 0 32 32"><g shape-rendering="auto"><path d="M13.4 0.4L30.6 8.8V26.1L13.4 17.7Z" fill="#fff" stroke="#000" stroke-width="1.2" stroke-linejoin="miter"/><path d="M13.4 4.6000000000000005L30.6 13.0" stroke="#000" stroke-width="1"/><path d="M14.2 1.7L16.0 2.6L16.0 5.3L14.2 4.4Z" fill="#c8c8c8"/><path d="M16.6 2.8L24.2 6.5L24.2 9.4L16.6 5.7Z" fill="#1818f8"/><path d="M25.4 7.3L27.0 8.1L27.0 10.6L25.4 9.8Z" fill="#c8c8c8" stroke="#000" stroke-width="0.5"/><path d="M28.2 8.7L29.8 9.4L29.8 11.9L28.2 11.2Z" fill="#c8c8c8" stroke="#000" stroke-width="0.5"/><path d="M5.4 3.2L22.8 11.7V29.0L5.4 20.5Z" fill="#fff" stroke="#000" stroke-width="1.2" stroke-linejoin="miter"/><path d="M5.4 7.4L22.8 15.9" stroke="#000" stroke-width="1"/><path d="M6.2 4.5L8.0 5.4L8.0 8.1L6.2 7.2Z" fill="#c8c8c8"/><path d="M8.6 5.6L16.2 9.3L16.2 12.2L8.6 8.5Z" fill="#1818f8"/><path d="M17.4 10.1L19.0 10.9L19.0 13.4L17.4 12.6Z" fill="#c8c8c8" stroke="#000" stroke-width="0.5"/><path d="M20.2 11.5L21.8 12.2L21.8 14.7L20.2 14.0Z" fill="#c8c8c8" stroke="#000" stroke-width="0.5"/><path d="M1.2 13.4L12.7 19.0V30.0L1.2 24.4Z" fill="#fff" stroke="#000" stroke-width="1.2" stroke-linejoin="miter"/><path d="M1.2 17.6L12.7 23.2" stroke="#000" stroke-width="1"/><path d="M2.0 14.7L3.8 15.6L3.8 18.3L2.0 17.4Z" fill="#c8c8c8"/><path d="M2.0 14.6L9.0 18.0L9.0 20.9L2.0 17.5Z" fill="#10c8c0"/><path d="M10.2 18.8L11.8 19.6L11.8 22.1L10.2 21.3Z" fill="#c8c8c8" stroke="#000" stroke-width="0.5"/></g></svg>
<svg class="px" style="left:104px;top:6px" width="32" height="32" viewBox="0 0 32 32"><g shape-rendering="auto" transform="translate(1.2,-0.8)"><defs><linearGradient id="gPH" x1="0" x2="1" y1="0" y2="0.6"><stop offset="0" stop-color="#fff"/><stop offset="0.45" stop-color="#e0e0e0"/><stop offset="1" stop-color="#888"/></linearGradient></defs>
<path d="M1.6 2.4L4 0.6L14.5 5L16 3.8C18 3,20.5 3.8,22 5.2C24 7,25 9.5,25.2 12V31.5L23 31.5L16.5 28V21L1.6 20.6Z" fill="#000" stroke="#000" stroke-width="1.4" stroke-linejoin="round"/>
<path d="M2 2.8L23 13V31L17 28V21L2 20.5Z" fill="url(#gPH)"/>
<path d="M4 1.4L14.5 6.2L17 9.2L19.5 11L22.5 11L24.3 12.5V31" stroke="#ffa848" stroke-width="1.7" fill="none" stroke-linejoin="round"/>
<path d="M13 5.6L15 4.6C17 3.8,19.5 4.4,21 6C22.5 7.5,23.5 9.5,24 11.5L21 11.5L19 10.8L17.5 9.5Z" fill="#ffc070"/>
<path d="M12 12.5L3.5 21H6V28H18V21H20.5Z" fill="#000"/>
<path d="M6.3 14V19" stroke="#000" stroke-width="1.4"/>
<path d="M12 14.6L6 20.5H7.2V26.8H10.4V22.5H13V26.8H16.8V20.5H18Z" fill="#fff"/>
<path d="M25.8 25.5L29.5 29L25.8 29.5Z" fill="#000"/>
</g></svg>
<svg class="px" style="left:146px;top:6px" width="32" height="32" viewBox="0 0 32 32"><g>
<rect x="9.5" y="25" width="14" height="2.5" fill="#c0c0c0" stroke="#000" stroke-width="1"/>
<rect x="5.5" y="27.5" width="21" height="3" fill="#f0f0f0" stroke="#000" stroke-width="1"/>
<rect x="15.5" y="0.5" width="16" height="24" fill="#e8e8e8" stroke="#000" stroke-width="1"/>
<rect x="17" y="1.5" width="14" height="1.5" fill="#fff"/><rect x="29" y="3" width="2" height="20" fill="#c0c0c0"/>
<rect x="17" y="4" width="11" height="15" fill="#000"/>
<rect x="18.0" y="6" width="1" height="2" fill="#20a0a0"/><rect x="20.0" y="6" width="1" height="2" fill="#10a010"/><rect x="22.0" y="6" width="1" height="2" fill="#c0a000"/><rect x="24.0" y="6" width="1" height="2" fill="#e08020"/><rect x="26.0" y="6" width="1" height="2" fill="#a01010"/><rect x="18.0" y="9" width="1" height="2" fill="#20d0d0"/><rect x="20.0" y="9" width="1" height="2" fill="#20d020"/><rect x="22.0" y="9" width="1" height="2" fill="#e0c000"/><rect x="24.0" y="9" width="1" height="2" fill="#ff8000"/><rect x="26.0" y="9" width="1" height="2" fill="#ffffff"/><rect x="18.0" y="12" width="1" height="2" fill="#20f0f0"/><rect x="20.0" y="12" width="1" height="2" fill="#10e010"/><rect x="22.0" y="12" width="1" height="2" fill="#fff000"/><rect x="24.0" y="12" width="1" height="2" fill="#ffa060"/><rect x="26.0" y="12" width="1" height="2" fill="#f01010"/><rect x="18.0" y="15" width="1" height="2" fill="#ffffff"/><rect x="20.0" y="15" width="1" height="2" fill="#ffffff"/><rect x="22.0" y="15" width="1" height="2" fill="#fff8d0"/><rect x="24.0" y="15" width="1" height="2" fill="#ffe8c0"/><rect x="26.0" y="15" width="1" height="2" fill="#ffc8c8"/>
<rect x="17" y="20" width="12" height="3" fill="#d0d0d0"/><g fill="#909090"><rect x="18" y="21" width="1" height="1"/><rect x="20" y="21" width="1" height="1"/><rect x="22" y="21" width="1" height="1"/></g><rect x="25" y="21" width="3" height="1" fill="#10d010"/>
<path d="M0.5 0.5L2.5 -0.5H16.5V25.5H2.5L0.5 23.5Z" fill="#10a010" stroke="#000" stroke-width="1" shape-rendering="auto"/>
<path d="M3 0.5H15.5V1.5H3z" fill="#30c830"/>
<g fill="#f0f0c0"><rect x="1" y="2" width="2" height="1"/><rect x="1" y="4" width="2" height="1"/><rect x="1" y="6" width="2" height="1"/><rect x="1" y="8" width="2" height="1"/><rect x="1" y="10" width="2" height="1"/></g>
<rect x="1" y="14" width="1" height="10" fill="#fff"/>
<g stroke="#c0b0b0" stroke-width="1" fill="none"><path d="M3 4.5H8M3 6.5H8M6.5 7V11M9.5 8V13L7 15.5V19M11.5 8V13L13 15V19M10 13V18"/></g>
<rect x="8" y="3" width="5" height="5" fill="#808080"/><rect x="8" y="7" width="5" height="1" fill="#202020"/><rect x="12" y="4" width="1" height="4" fill="#202020"/>
<rect x="5" y="10" width="3" height="2" fill="#808080"/><rect x="5" y="12" width="3" height="1" fill="#202020"/>
<rect x="5" y="18" width="4" height="2" fill="#909090"/><rect x="6" y="20" width="3" height="1" fill="#202020"/><rect x="10" y="18" width="4" height="2" fill="#909090"/><rect x="10" y="20" width="3" height="1" fill="#202020"/>
<rect x="6" y="2" width="1" height="1" fill="#1010ff"/><rect x="13" y="9" width="1" height="2" fill="#f01010"/><rect x="13" y="12" width="1" height="2" fill="#1010ff"/><rect x="13" y="15" width="1" height="2" fill="#1010ff"/><rect x="5" y="13.5" width="1" height="2" fill="#20c8c8"/>
</g></svg>
<svg class="px" style="left:189px;top:6px" width="32" height="32" viewBox="0 0 32 32"><g shape-rendering="auto">
<path d="M3.5 4H26.5V31.3H3.5Z" fill="#fff" stroke="#000" stroke-width="1.2"/>
<path d="M0.6 2.5L2.5 0.6H23.3V28.3H0.6Z" fill="#fff" stroke="#000" stroke-width="1.2"/>
<path d="M0.6 2.8H2.8V0.6" fill="none" stroke="#000" stroke-width="0.8"/>
<g fill="#1010f0"><rect x="17" y="4" width="3.2" height="3"/><rect x="18" y="2" width="2" height="1"/><rect x="21" y="2.2" width="1" height="1.8"/><rect x="21" y="5" width="1" height="2"/>
<rect x="2.2" y="20" width="3" height="3"/><rect x="3" y="18" width="2" height="1"/><rect x="6" y="18.2" width="1" height="1.8"/><rect x="6" y="21" width="1" height="2"/>
<rect x="7" y="27" width="3" height="1"/><rect x="8" y="25" width="2" height="1"/><rect x="11" y="25" width="1" height="1.8"/></g>
<path d="M20 20.5L30.5 30.3" stroke="#000" stroke-width="3.2" stroke-linecap="round"/><path d="M20.5 20.3L30 29.3" stroke="#d8d8d8" stroke-width="1.5" stroke-linecap="round"/>
<circle cx="14.5" cy="14.2" r="6.4" fill="#fff" stroke="#000" stroke-width="1.9"/>
<g fill="#1010f0"><rect x="11" y="14" width="4" height="3.6"/><rect x="12" y="11.2" width="2" height="1.8"/><rect x="15" y="12" width="2" height="2"/><rect x="16" y="15" width="2" height="2"/></g>
<path d="M15 10.2L17 10.8L17.8 12" stroke="#40e8f0" stroke-width="1" fill="none"/>
</g></svg>
<svg class="px" style="left:232px;top:6px" width="32" height="32" viewBox="0 0 32 32"><g shape-rendering="auto"><defs><pattern id="pPk" width="2" height="2" patternUnits="userSpaceOnUse"><rect width="2" height="2" fill="#909010"/><rect width="1" height="1" fill="#d8d800"/><rect x="1" y="1" width="1" height="1" fill="#d8d800"/></pattern></defs>
<path d="M3.2 8L16 14.5V29L3.2 24.5Z" fill="#ffffc8" stroke="#000" stroke-width="1.1"/>
<path d="M16 14.5L28.5 8V24.5L16 29Z" fill="#c8c818" stroke="#000" stroke-width="1.1"/>
<path d="M3.2 8L16 2.5L28.5 8L16 14.5Z" fill="#8c8c10" stroke="#000" stroke-width="1"/>
<path d="M16 2.5L28.5 8L16 14.5Z" fill="url(#pPk)"/>
<path d="M0.3 5.8L13 -1L16 2.5L3.2 8.6Z" fill="#ffffd8" stroke="#000" stroke-width="1" stroke-dasharray="2 0.7"/>
<path d="M31.5 5.8L19.5 -1L16 2.5L28.5 8.6Z" fill="#ffffd8" stroke="#000" stroke-width="1" stroke-dasharray="2 0.7"/>
<path d="M0.6 8.2L3.2 9.8L14 15.5" stroke="#000" stroke-width="1" stroke-dasharray="2 0.7" fill="none"/>
<path d="M19.5 19L31 29.6" stroke="#000" stroke-width="4" stroke-linecap="round"/><path d="M19.5 19L31 29.6" stroke="#ff9030" stroke-width="2.2" stroke-linecap="round"/>
<path d="M12.4 16L20 11L22.8 15L16 22L12.6 20Z" fill="#585858" stroke="#000" stroke-width="0.9"/>
<path d="M13.5 16.5L20 12" stroke="#a0a0a0" stroke-width="1.2"/>
<path d="M15.5 29.5L28 18.5" stroke="#000" stroke-width="4.6" stroke-linecap="round"/>
<path d="M26 16.5L28 14.2L29.2 16.5L31 15.5L31.8 18L29 20.5L26.8 19.5Z" fill="#40d0e0" stroke="#000" stroke-width="1"/>
<path d="M15.5 29.5L28.5 18" stroke="#40d0e0" stroke-width="2.8" stroke-linecap="round"/>
<path d="M16.5 28L27.5 18.2" stroke="#c0f0f8" stroke-width="0.8"/>
</g></svg>
<svg class="px" style="left:480px;top:6px" width="32" height="32" viewBox="0 0 32 32"><g shape-rendering="auto">
<path d="M0.6 17.4V23.5L15.3 30.8L31.6 14V8.3Z" fill="#fff" stroke="#000" stroke-width="1.1" stroke-linejoin="round"/>
<path d="M15.3 24.2L31.6 8.3V13L15.3 30Z" fill="#d8c8c8"/>
<path d="M0.8 23L15.3 30.2L31.4 13.8" stroke="#10d0d8" stroke-width="1.4" fill="none"/>
<path d="M0.6 17.4V23" stroke="#000" stroke-width="1.6"/>
<path d="M0.6 17.4L20.5 2.8L31.6 8.3L15.3 24.2Z" fill="#10c4cc" stroke="#000" stroke-width="1.1" stroke-linejoin="round"/>
<path d="M15.3 24.2L24 15.5L17 12L13 20Z" fill="#0898a8" opacity="0.5"/>
<path d="M13.2 11.5H16.8V16.5L15 18.6L13.2 16.5Z" fill="#f0f0f0" stroke="#000" stroke-width="1"/>
<path d="M12.6 13H17.4M12.6 15H17.4" stroke="#000" stroke-width="0.8"/>
<path d="M12 -0.5H17.5Q19.4 -0.5,19.4 1.5V8Q19.4 9.5,18 10L16.5 11.2H13.2L11.5 10Q10.2 9.5,10.2 8V1.5Q10.2 -0.5,12 -0.5Z" fill="#fff" stroke="#000" stroke-width="1.2"/>
<path d="M16 0.3H17.4Q18.6 0.3,18.6 1.6V8Q18.6 9,17.6 9.4L16 10.5H14.8V0.3Z" fill="#ffe820"/>
<path d="M11.4 8.5L13.4 10.5H16" stroke="#ffe820" stroke-width="1" fill="none"/>
<rect x="13.9" y="2.2" width="2.2" height="4" fill="#000"/><rect x="13.9" y="7.2" width="2.2" height="1.7" fill="#000"/>
</g></svg>
<svg class="px" style="left:523px;top:6px" width="32" height="32" viewBox="0 0 32 32"><g>
<path d="M8.5 -0.5H27.5L31.5 3.5V30.5H8.5Z" fill="#fff" stroke="#000" stroke-width="1" shape-rendering="auto"/>
<rect x="13" y="0" width="1" height="30" fill="#b0a8f0"/><rect x="17" y="0" width="1" height="30" fill="#b0a8f0"/><rect x="21" y="0" width="1" height="30" fill="#b0a8f0"/><rect x="25" y="0" width="1" height="30" fill="#b0a8f0"/><rect x="29" y="0" width="1" height="30" fill="#b0a8f0"/><rect x="9" y="3" width="22" height="1" fill="#b0a8f0"/><rect x="9" y="7" width="22" height="1" fill="#b0a8f0"/><rect x="9" y="11" width="22" height="1" fill="#b0a8f0"/><rect x="9" y="15" width="22" height="1" fill="#b0a8f0"/><rect x="9" y="19" width="22" height="1" fill="#b0a8f0"/><rect x="9" y="23" width="22" height="1" fill="#b0a8f0"/><rect x="9" y="27" width="22" height="1" fill="#b0a8f0"/>
<path d="M27.5 -0.5V3.5H31.5Z" fill="#fff" stroke="#000" stroke-width="0.8" shape-rendering="auto"/>
<g shape-rendering="auto"><path d="M21 4.5L23.8 3.6L30 20L29.6 22.6L27.4 21Z" fill="#f08818" stroke="#804000" stroke-width="0.5"/><path d="M22.5 4.5L28.8 21" stroke="#ffc070" stroke-width="0.9"/><path d="M27.4 21L30 20L29.6 22.6Z" fill="#f0c0a0"/><path d="M28.8 21.6L29.8 21.3L29.7 22.8Z" fill="#000"/></g>
<rect x="0.5" y="3.5" width="17" height="23" fill="#109494" stroke="#000" stroke-width="1"/>
<rect x="1" y="4" width="16" height="1" fill="#48d8d8"/><rect x="1" y="4" width="1" height="22" fill="#48d8d8"/><rect x="16" y="5" width="1" height="21" fill="#086868"/><rect x="2" y="25" width="15" height="1" fill="#086868"/>
<rect x="3.5" y="6.5" width="11.5" height="3.8" fill="#000"/>
<text x="8" y="10" font-family="Liberation Mono" font-weight="bold" font-size="4.6" fill="#30f040" shape-rendering="auto" textLength="6" lengthAdjust="spacingAndGlyphs">43</text>
<rect x="3.3" y="11.8" width="11.8" height="12.2" fill="#101010"/>
<rect x="4" y="12.5" width="2.8" height="2.4" fill="#d8d0d0"/><rect x="7.7" y="12.5" width="2.8" height="2.4" fill="#d8d0d0"/><rect x="11.4" y="12.5" width="2.8" height="2.4" fill="#d8d0d0"/><rect x="4" y="16.5" width="2.8" height="2.4" fill="#d8d0d0"/><rect x="7.7" y="16.5" width="2.8" height="2.4" fill="#d8d0d0"/><rect x="11.4" y="16.5" width="2.8" height="2.4" fill="#d8d0d0"/><rect x="4" y="20.5" width="2.8" height="2.4" fill="#d8d0d0"/><rect x="7.7" y="20.5" width="2.8" height="2.4" fill="#d8d0d0"/><rect x="11.4" y="20.5" width="2.8" height="2.4" fill="#f01020"/>
</g></svg>
<svg class="px" style="left:566px;top:6px" width="32" height="32" viewBox="0 0 32 32"><g shape-rendering="auto"><defs><linearGradient id="gKn" x1="0" x2="1"><stop offset="0" stop-color="#f0f030"/><stop offset="0.55" stop-color="#f8f870"/><stop offset="0.85" stop-color="#fffff0"/></linearGradient></defs>
<path d="M0.5 19V23.2L15.8 30.8L31.8 23.5V19.5L30.5 15L16.6 10.2Z" fill="#d8d820" stroke="#000" stroke-width="1.2" stroke-linejoin="round" stroke-dasharray="2.2 0.5"/>
<path d="M0.8 21L15.8 28.2L31.4 21.4M0.8 22.6L15.8 29.8L31.4 23" stroke="#a8a800" stroke-width="0.8" fill="none"/>
<path d="M0.5 19L16.6 10.4L30.8 15L28 18L31.5 19.3L15.8 26Z" fill="url(#gKn)"/>
<path d="M0.5 19L15.8 26L31.5 19.3" stroke="#c8c800" stroke-width="0.8" fill="none"/>
<path d="M7 18.2C11 19.5,15 18,20 18.4M14.5 14.2C13 17,12 19,13.2 22.6" stroke="#e42020" stroke-width="1.7" fill="none" stroke-linecap="round"/>
<path d="M17.6 16.8L19 13L30.6 -0.8L32.6 4.6L22 15Z" fill="#000"/>
<path d="M24 8.2L30.4 0.6L31.6 4L25.8 10.4Z" fill="#f8f8f8"/><path d="M25.2 9.8L31.2 3.2L31.6 4.4L26 10.6Z" fill="#b0b0b0"/>
<path d="M19.6 13.6L23.2 9.4L25 11.2L21.2 14.6Z" fill="#787878"/>
</g></svg>
<svg class="px" style="left:609px;top:6px" width="32" height="32" viewBox="0 0 32 32"><g>
<rect x="0.5" y="-0.5" width="31" height="31" fill="#e0e0e0" stroke="#000" stroke-width="1"/>
<rect x="1" y="0" width="30" height="1" fill="#fff"/><rect x="1" y="0" width="2" height="30" fill="#fff"/><rect x="29" y="1" width="2" height="29" fill="#a0a0a0"/><rect x="2" y="29" width="29" height="1" fill="#a0a0a0"/>
<rect x="3" y="2" width="26" height="1" fill="#909090"/><rect x="3" y="2" width="1" height="22" fill="#909090"/><rect x="28" y="3" width="1" height="21" fill="#fff"/><rect x="4" y="24" width="25" height="1" fill="#fff"/>
<rect x="4" y="3" width="24" height="21" fill="#000"/>
<g fill="#e8ffff"><rect x="6" y="5" width="1" height="1"/><rect x="7" y="6" width="1" height="1"/><rect x="6" y="7" width="1" height="1"/><rect x="9" y="7" width="2" height="1"/></g>
<g fill="#fff"><rect x="3" y="26" width="5" height="1"/><rect x="9" y="26" width="5" height="1"/><rect x="17" y="26" width="4" height="1"/><rect x="23" y="26" width="5" height="1"/></g>
<g fill="#808080"><rect x="3" y="27" width="5" height="1"/><rect x="9" y="27" width="5" height="1"/><rect x="17" y="27" width="4" height="1"/><rect x="23" y="27" width="5" height="1"/><rect x="7" y="26" width="1" height="2"/><rect x="13" y="26" width="1" height="2"/><rect x="20" y="26" width="1" height="2"/><rect x="27" y="26" width="1" height="2"/></g>
</g></svg>
<svg class="px" style="left:652px;top:6px" width="32" height="32" viewBox="0 0 32 32"><g shape-rendering="auto"><defs><linearGradient id="gEd" x1="0.9" y1="0" x2="0.1" y2="1"><stop offset="0" stop-color="#10d028"/><stop offset="0.6" stop-color="#10a818"/><stop offset="1" stop-color="#686010"/></linearGradient></defs>
<path d="M0.5 19V22.5L15.5 30.8L30.9 23V20L24 16L14.8 12.7Z" fill="#b8b8b8" stroke="#000" stroke-width="1.2" stroke-linejoin="round" stroke-dasharray="2.2 0.5"/>
<path d="M0.8 22.2L15.5 30L30.6 22.6" stroke="#108030" stroke-width="1.4" fill="none"/>
<path d="M0.8 20.6L15.5 28.6L30.6 21.2" stroke="#888" stroke-width="0.8" fill="none"/>
<path d="M0.5 19L14.8 12.7L30.9 20L15.5 27.6Z" fill="#fcfcfc"/>
<path d="M15.5 27.6L30.9 20" stroke="#909090" stroke-width="0.7"/>
<path d="M1.2 17.6L6.4 5.4L20.5 -0.6L15.3 12.2Z" fill="url(#gEd)" stroke="#000" stroke-width="1.2" stroke-linejoin="round" stroke-dasharray="2.2 0.5"/>
<path d="M9.5 21.5L11.5 17.5L12.5 15.5L14 19L15.8 17.6" stroke="#1010f0" stroke-width="1.5" fill="none" stroke-linejoin="round"/>
<path d="M16.8 19L18 15L27.5 5L30.4 7.6L20.5 17.6Z" fill="#f08818" stroke="#000" stroke-width="1" stroke-linejoin="round"/>
<path d="M19 15L28 5.8" stroke="#ffc078" stroke-width="1.2"/>
<path d="M16.8 19L18 15.2L20.4 17.5Z" fill="#f8d0b0"/><path d="M16.8 19L17.3 17.6L18.2 18.4Z" fill="#303030"/>
</g></svg>
<svg class="px" style="left:695px;top:6px" width="32" height="32" viewBox="0 0 32 32"><g shape-rendering="auto">
<path d="M16 -0.4H22.8L31.6 8.2V12.8L29.5 14.2L31.6 15.8V20.6L29.5 22L31.6 23.8V29.4H24.4L16 21Z" fill="#ff9828" stroke="#000" stroke-width="1.2" stroke-linejoin="round"/>
<path d="M16 -0.4H22.8L31.4 8.2H24.4Z" fill="#ffdca8"/>
<path d="M16 0L24.4 8.4V29.2L16 21Z" fill="#ffb868"/>
<path d="M24.4 8.4H31.2V12.7H24.4zM24.4 15.8H31.2V20.5H24.4zM24.4 23.9H31.2V29H24.4z" fill="#ff9020"/>
<path d="M24.4 8.4H31.2V9.4H24.4zM24.4 15.8H31.2V16.8H24.4zM24.4 23.9H31.2V24.9H24.4z" fill="#ffc890"/>
<path d="M19.5 8L24.4 12.8H29.8L28.5 14.3L29.8 15.7H24.4L19.5 11.5Z" fill="#a81000"/>
<path d="M19.5 16L24.4 20.6H29.8L28.5 22L29.8 23.8H24.4L19.5 19.5Z" fill="#a81000"/>
<path d="M20 9.6L24.4 13.6H29M20 17.6L24.4 21.6H29" stroke="#ff7000" stroke-width="1.3" fill="none"/>
</g>
<path d="M0.4 16.6L9.3 -0.4L20 5.4L15.3 16.9L7.4 30.2Z" fill="#fcfcfc" stroke="#000" stroke-width="1.2" stroke-linejoin="round" stroke-dasharray="1.6 0.7"/>
<path d="M9.8 0.6V16.4H1M11.2 10.6L19.6 5.6M7.5 17.4V29.5" stroke="#808080" stroke-width="0.9" fill="none"/></svg>
<svg class="px" style="left:738px;top:6px" width="32" height="32" viewBox="0 0 32 32"><g>
<rect x="3.5" y="28" width="8" height="2.5" fill="#000"/><rect x="22.5" y="28" width="6.5" height="2.5" fill="#000"/><rect x="24" y="29" width="4" height="1" fill="#20c0d0"/>
<rect x="0.5" y="-0.5" width="31" height="28.5" fill="#585858" stroke="#000" stroke-width="1"/>
<rect x="1" y="0" width="30" height="1" fill="#b0b0b0"/><rect x="1" y="1" width="1" height="13" fill="#909090"/>
<rect x="1" y="14" width="30" height="1" fill="#000"/><rect x="1" y="15" width="30" height="1" fill="#888"/>
<rect x="3" y="2" width="20" height="10" fill="#d0d0d0"/><rect x="3" y="2" width="19" height="9" fill="#303030"/>
<rect x="4" y="2.5" width="18" height="8.5" fill="#002848"/>
<rect x="5" y="9" width="3" height="1" fill="#10f020"/><rect x="5" y="7" width="3" height="1" fill="#10f020"/><rect x="5" y="5" width="3" height="1" fill="#106060"/><rect x="5" y="3" width="3" height="1" fill="#0c5050"/><rect x="9" y="9" width="3" height="1" fill="#10f020"/><rect x="9" y="7" width="3" height="1" fill="#10f020"/><rect x="9" y="5" width="3" height="1" fill="#ffa040"/><rect x="9" y="3" width="3" height="1" fill="#0c5050"/><rect x="13" y="9" width="3" height="1" fill="#10f020"/><rect x="13" y="7" width="3" height="1" fill="#10f020"/><rect x="13" y="5" width="3" height="1" fill="#ffa040"/><rect x="13" y="3" width="3" height="1" fill="#f01010"/><rect x="17" y="9" width="3" height="1" fill="#10f020"/><rect x="17" y="7" width="3" height="1" fill="#10f020"/><rect x="17" y="5" width="3" height="1" fill="#106060"/><rect x="17" y="3" width="3" height="1" fill="#0c5050"/>
<g shape-rendering="auto"><circle cx="26.5" cy="4.2" r="2.3" fill="#484848" stroke="#202020" stroke-width="0.8"/><circle cx="26.5" cy="9.4" r="2.3" fill="#484848" stroke="#202020" stroke-width="0.8"/><path d="M24.6 3.4A2.2 2.2 0 0 1 27.5 2.3M24.6 8.6A2.2 2.2 0 0 1 27.5 7.5" stroke="#a0a0a0" stroke-width="0.7" fill="none"/></g>
<rect x="17" y="17" width="12" height="1" fill="#a0a0a0"/><rect x="18" y="18.5" width="11" height="3.5" fill="#707070"/><rect x="18" y="22" width="11" height="1" fill="#202020"/>
<rect x="20" y="24" width="2" height="2" fill="#000"/><rect x="20" y="24" width="1" height="1" fill="#e0e0e0"/><rect x="24" y="24" width="2" height="2" fill="#000"/><rect x="24" y="24" width="1" height="1" fill="#e0e0e0"/><rect x="27" y="24" width="2" height="2" fill="#10e020"/>
<g shape-rendering="auto"><defs><linearGradient id="gCdp" x1="0" y1="0" x2="1" y2="1"><stop offset="0" stop-color="#e0f8e8"/><stop offset="0.25" stop-color="#f0d0f0"/><stop offset="0.5" stop-color="#ffffff"/><stop offset="0.75" stop-color="#f0c8e0"/><stop offset="0.9" stop-color="#c0e0f8"/></linearGradient></defs>
<circle cx="9" cy="21.8" r="8.3" fill="url(#gCdp)" stroke="#000" stroke-width="1" stroke-dasharray="2 0.6"/>
<circle cx="9" cy="21.8" r="2.6" fill="#d0d0d0" stroke="#202020" stroke-width="0.9"/><circle cx="9" cy="21.8" r="1" fill="#000"/></g>
</g></svg>
<svg class="px" style="left:781px;top:6px" width="32" height="32" viewBox="0 0 32 32"><g shape-rendering="auto">
<path d="M0.5 7V12.7L17.9 21.2L31.8 14.8V9L14 0.2Z" fill="#9c9c9c" stroke="#000" stroke-width="1.2" stroke-linejoin="round" stroke-dasharray="2.2 0.5"/>
<path d="M0.5 7L14 0.4L31.8 9L17.9 15.8Z" fill="#d8d8d8"/>
<path d="M0.5 7.4L17.9 16.2L31.8 9.4" stroke="#fff" stroke-width="1" fill="none"/>
<g stroke="#303030" stroke-width="1.1" fill="none"><path d="M9.5 4.5L12.5 3L15 4.2M13.5 6.5L16.5 5L19 6.2M11 8.2L14 6.8M15.5 10.6L18.5 9L21 10.2M19.5 12.4L22.5 11L24.5 12M7 6L9 5M20 8L23 6.6"/></g>
<g stroke="#fff" stroke-width="0.9" fill="none"><path d="M10.5 5.5L13 4.3M14.5 7.5L17 6.3M16.5 11.6L19 10.4M5 8.2L8 9.6M23 9.5L27 11"/></g>
<path d="M13.2 19.0L14.6 17.0L16.0 19.2L17.4 15.0L18.8 18.6L20.2 14.0L21.6 18.2L23.0 14.2L24.4 18.4L25.8 15.4L27.2 19.0L28.6 18.0L30.0 20.2L32.0 21.6L30.0 23.0L28.6 25.2L27.2 24.2L25.8 27.8L24.4 24.8L23.0 29.0L21.6 25.0L20.2 29.2L18.8 24.6L17.4 28.2L16.0 24.0L14.6 26.2L13.2 24.2Z" fill="#ffffc0" stroke="#000" stroke-width="0.75" stroke-linejoin="round"/>

<path d="M2.2 20L10 14.3L11 29.4Z" fill="#10a8b8" stroke="#000" stroke-width="1.1" stroke-linejoin="round"/>
<path d="M2.2 20L10 14.3L9 20Z" fill="#20d8e0"/>
<path d="M10 14.3C13.5 17,13.5 26,11 29.4C8.5 27,8 17,10 14.3Z" fill="#e8e8e8" stroke="#000" stroke-width="0.9"/>
<path d="M10.2 17C11.5 19,11.5 25,10.6 27" stroke="#909090" stroke-width="1" fill="none"/>
</g></svg>
<svg class="px" style="left:862px;top:9px" width="22" height="21" viewBox="0 0 22 21"><g shape-rendering="auto">
<path d="M0.6 5.6L4.6 1.2L9.6 3.6V12L8.6 17.4L0.6 13.2Z" fill="#e0e0e0" stroke="#000" stroke-width="1" stroke-linejoin="round" stroke-dasharray="1.8 0.5"/>
<path d="M0.6 5.6L8.6 9.6V17.4L0.6 13.2Z" fill="#f0f0f0"/>
<path d="M2 7.4L7.6 10.4V15L2 12Z" fill="#109898"/>
<path d="M0.4 14L8.4 18.4L10 17L11.5 18.5L8.8 20.8L0.4 16.4Z" fill="#b8b8b8" stroke="#000" stroke-width="0.9" stroke-dasharray="1.8 0.5"/>
<rect x="0.8" y="14.8" width="1.4" height="1.4" fill="#10e020"/>
<path d="M9.6 4.2L13.6 0.4L21.4 4.2V12.6L17.6 16.8L9.6 12.8Z" fill="#d8d8d8" stroke="#000" stroke-width="1" stroke-linejoin="round" stroke-dasharray="1.8 0.5"/>
<path d="M9.6 4.2L17.6 8.6V16.8L9.6 12.8Z" fill="#f4f4f4"/>
<path d="M17.6 8.6L21.4 4.2V12.6L17.6 16.8Z" fill="#a8a8a8"/>
<path d="M11 6.6L16.8 9.6V14.2L11 11.2Z" fill="#10d020"/>
<path d="M9.6 13.6L17.4 17.6L21.4 13.6V15.6L17.6 19.6L9.6 15.6Z" fill="#b0b0b0" stroke="#000" stroke-width="0.9" stroke-dasharray="1.8 0.5"/>
<rect x="10" y="13.6" width="1.4" height="1.4" fill="#10e020"/>
</g></svg>
<svg style="left:934px;top:9px" width="16" height="16" viewBox="0 0 32 32"><g shape-rendering="auto"><defs><linearGradient id="gKn" x1="0" x2="1"><stop offset="0" stop-color="#f0f030"/><stop offset="0.55" stop-color="#f8f870"/><stop offset="0.85" stop-color="#fffff0"/></linearGradient></defs>
<path d="M0.5 19V23.2L15.8 30.8L31.8 23.5V19.5L30.5 15L16.6 10.2Z" fill="#d8d820" stroke="#000" stroke-width="1.2" stroke-linejoin="round" stroke-dasharray="2.2 0.5"/>
<path d="M0.8 21L15.8 28.2L31.4 21.4M0.8 22.6L15.8 29.8L31.4 23" stroke="#a8a800" stroke-width="0.8" fill="none"/>
<path d="M0.5 19L16.6 10.4L30.8 15L28 18L31.5 19.3L15.8 26Z" fill="url(#gKn)"/>
<path d="M0.5 19L15.8 26L31.5 19.3" stroke="#c8c800" stroke-width="0.8" fill="none"/>
<path d="M7 18.2C11 19.5,15 18,20 18.4M14.5 14.2C13 17,12 19,13.2 22.6" stroke="#e42020" stroke-width="1.7" fill="none" stroke-linecap="round"/>
<path d="M17.6 16.8L19 13L30.6 -0.8L32.6 4.6L22 15Z" fill="#000"/>
<path d="M24 8.2L30.4 0.6L31.6 4L25.8 10.4Z" fill="#f8f8f8"/><path d="M25.2 9.8L31.2 3.2L31.6 4.4L26 10.6Z" fill="#b0b0b0"/>
<path d="M19.6 13.6L23.2 9.4L25 11.2L21.2 14.6Z" fill="#787878"/>
</g></svg>
<!-- handles -->
<div style="position:absolute;left:0;top:-1px;width:12px;height:45px;box-sizing:border-box;border-left:2px solid #fff;border-top:2px solid #fff;border-right:1px solid #000;border-bottom:1px solid #000;box-shadow:inset -1px -1px 0 #808080;"></div>
<svg class="px" style="left:2px;top:3px" width="8" height="40" viewBox="0 0 8 40"><defs><pattern id="pdot" width="8" height="3" patternUnits="userSpaceOnUse"><rect x="2" y="1" width="1" height="1" fill="#707878"/><rect x="5" y="0" width="1" height="1" fill="#707878"/></pattern></defs><rect width="8" height="40" fill="url(#pdot)"/><rect x="1" y="14" width="6" height="10" fill="#d4dcdc"/><path d="M2 18.5L6 14.5V22.5Z" fill="#000" shape-rendering="auto"/></svg>
<div style="position:absolute;left:1012px;top:-1px;width:12px;height:45px;box-sizing:border-box;border-left:2px solid #fff;border-top:2px solid #fff;border-right:1px solid #000;border-bottom:1px solid #000;box-shadow:inset -1px -1px 0 #808080;"></div>
<svg class="px" style="left:1014px;top:3px" width="8" height="40" viewBox="0 0 8 40"><rect width="8" height="40" fill="url(#pdot)"/><rect x="1" y="14" width="6" height="10" fill="#d4dcdc"/><path d="M7 18.5L3 14.5V22.5Z" fill="#000" shape-rendering="auto"/></svg>
<!-- small up arrows -->
<svg style="left:46px;top:2px" width="8" height="4" viewBox="0 0 8 4"><path d="M0 4L4 0L8 4Z" fill="#000"/></svg>
<svg style="left:89px;top:2px" width="8" height="4" viewBox="0 0 8 4"><path d="M0 4L4 0L8 4Z" fill="#000"/></svg>
<svg style="left:261px;top:2px" width="8" height="4" viewBox="0 0 8 4"><path d="M0 4L4 0L8 4Z" fill="#000"/></svg>
<!-- X / lock buttons -->
<div class="pb" style="left:275px;top:-1px;width:22px;height:22px;"></div>
<svg style="left:279px;top:4px" width="14" height="14" viewBox="0 0 14 14"><path d="M2.2 2.6L12.5 13M12.8 2.6L2.2 12.6" stroke="#fff" stroke-width="2"/><path d="M1 1.2L12 12.2M11.8 1.2L1.2 11.2" stroke="#000" stroke-width="1.9"/></svg>
<div class="pb" style="left:275px;top:22px;width:22px;height:22px;"></div>
<svg class="px" style="left:280px;top:25px" width="12" height="15" viewBox="0 0 12 15"><path d="M2.5 7V4.5C2.5 0.8,9.5 0.8,9.5 4.5V7" stroke="#000" stroke-width="3" fill="none" shape-rendering="auto"/><path d="M2.5 7V4.5C2.5 1.2,9.5 1.2,9.5 4.5V7" stroke="#e8e8e8" stroke-width="1.2" fill="none" shape-rendering="auto"/><rect x="0" y="6" width="11" height="8" fill="#000"/><rect x="1" y="7" width="9" height="6" fill="#e4e4e4"/><rect x="2" y="9" width="7" height="1" fill="#606060"/><rect x="2" y="11" width="7" height="1" fill="#606060"/></svg>
<!-- pager -->
<div class="pb" style="left:297px;top:-1px;width:89px;height:22px;"><span style="left:4px;top:3px">One</span></div>
<div class="pb" style="left:387px;top:-1px;width:88px;height:22px;"><span style="left:3px;top:3px;letter-spacing:0.2px">Three</span></div>
<div class="pb" style="left:387px;top:22px;width:88px;height:22px;"><span style="left:3px;top:4px">Four</span></div>
<div style="position:absolute;left:298px;top:22px;width:88px;height:22px;box-sizing:border-box;border-top:1px solid #000;border-left:1px solid #000;border-right:1px solid #fff;border-bottom:1px solid #fff;background-image:repeating-conic-gradient(#ffffff 0 25%,#d4dcdc 0 50%);background-size:2px 2px;font-size:12px;"><span style="position:absolute;left:5px;top:5px;letter-spacing:0.5px">Two</span></div>
<!-- tray -->
<div style="position:absolute;left:837px;top:2px;width:122px;height:39px;box-sizing:border-box;border-top:1px solid #808080;border-left:1px solid #808080;border-right:1px solid #fff;border-bottom:1px solid #fff;"></div>
<div style="position:absolute;left:842px;top:15px;font-size:12px;letter-spacing:0.4px">En</div>
<svg class="px" style="left:886px;top:9px" width="49" height="24" viewBox="0 0 49 24"><rect width="49" height="24" fill="#000"/><g fill="#a0a0a0"><rect y="4" width="49" height="1"/><rect y="9" width="49" height="1"/><rect y="14" width="49" height="1"/><rect y="19" width="49" height="1"/></g><g fill="#fff" stroke="#fff" stroke-width="0.35" font-family="Liberation Sans" font-size="8" shape-rendering="auto"><text x="0.5" y="8.8" textLength="7.5" lengthAdjust="spacingAndGlyphs">IN</text><text x="25" y="8.8" textLength="15.5" lengthAdjust="spacingAndGlyphs">OUT</text></g></svg>
<!-- clock -->
<div style="position:absolute;left:973px;top:3px;font-size:12px;letter-spacing:0.3px;white-space:nowrap">22:25</div>
<div style="position:absolute;left:963px;top:18px;font-size:12px;letter-spacing:0.4px;white-space:nowrap">Dec 31</div>

</div>
</div>
</body>
</html>
